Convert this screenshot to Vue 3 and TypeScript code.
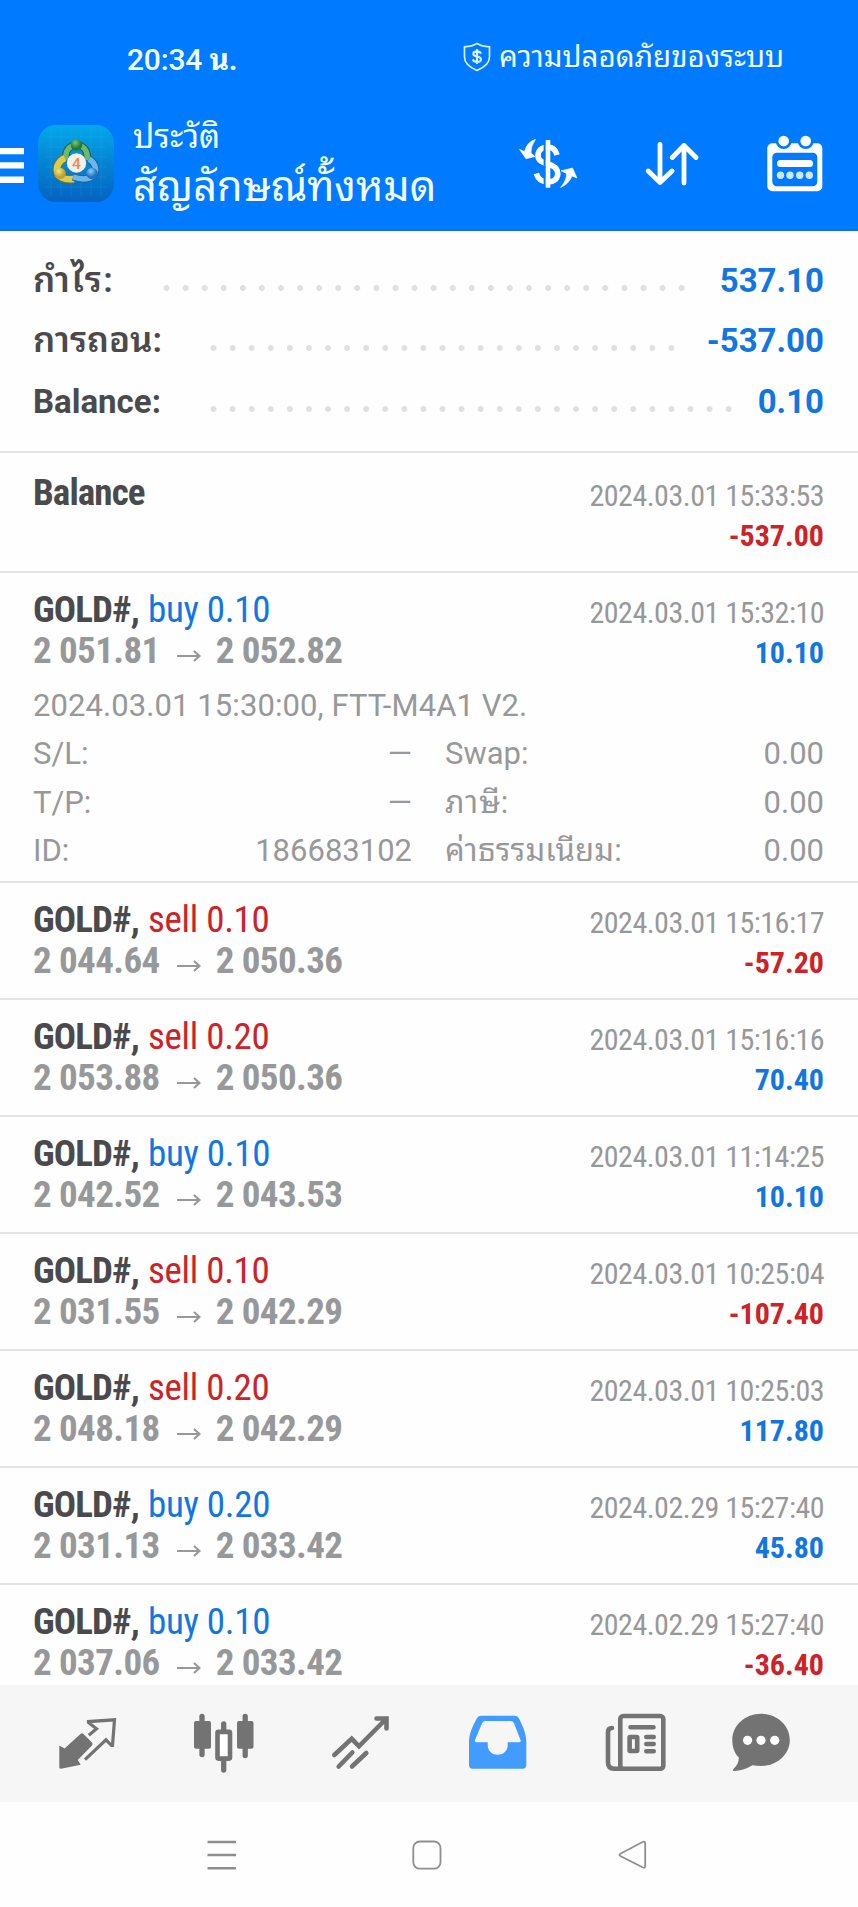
<script setup lang="ts">
interface Summary { label: string; value: string; labelWidth: number; dots: number; cls?: string }
interface Deal {
  kind: 'balance' | 'buy' | 'sell'
  volume?: string
  open?: string
  close?: string
  time: string
  profit: string
  expanded?: boolean
}

const summary: Summary[] = [
  { label: 'กำไร:', value: '537.10', labelWidth: 123, dots: 28, cls: 'thai wide' },
  { label: 'การถอน:', value: '-537.00', labelWidth: 170, dots: 25, cls: 'thai' },
  { label: 'Balance:', value: '0.10', labelWidth: 170, dots: 28 },
]

const deals: Deal[] = [
  { kind: 'balance', time: '2024.03.01 15:33:53', profit: '-537.00' },
  { kind: 'buy', volume: '0.10', open: '2 051.81', close: '2 052.82', time: '2024.03.01 15:32:10', profit: '10.10', expanded: true },
  { kind: 'sell', volume: '0.10', open: '2 044.64', close: '2 050.36', time: '2024.03.01 15:16:17', profit: '-57.20' },
  { kind: 'sell', volume: '0.20', open: '2 053.88', close: '2 050.36', time: '2024.03.01 15:16:16', profit: '70.40' },
  { kind: 'buy', volume: '0.10', open: '2 042.52', close: '2 043.53', time: '2024.03.01 11:14:25', profit: '10.10' },
  { kind: 'sell', volume: '0.10', open: '2 031.55', close: '2 042.29', time: '2024.03.01 10:25:04', profit: '-107.40' },
  { kind: 'sell', volume: '0.20', open: '2 048.18', close: '2 042.29', time: '2024.03.01 10:25:03', profit: '117.80' },
  { kind: 'buy', volume: '0.20', open: '2 031.13', close: '2 033.42', time: '2024.02.29 15:27:40', profit: '45.80' },
  { kind: 'buy', volume: '0.10', open: '2 037.06', close: '2 033.42', time: '2024.02.29 15:27:40', profit: '-36.40' },
]

const DOT_PITCH = 19.08
</script>

<template>
  <div class="phone">
    <header class="top">
      <div class="status">
        <div class="clock">20:34 <span class="clock-unit">น.</span></div>
        <div class="security">
          <svg width="28" height="30" viewBox="0 0 28 30" fill="none" stroke="#d8f0ff" stroke-width="1.7">
            <path d="M14 1.5C10 4 6 4.6 1.5 4.8V15C1.5 22 7 25.500 14 28.500C21 25.500 26.500 22 26.500 15V4.800C22 4.600 18 4 14 1.500Z" />
            <path d="M18 11.600C17.300 9.900 15.800 9.400 14 9.400C11.800 9.400 10.300 10.400 10.300 12C10.300 15.600 18 13.400 18 17.200C18 18.900 16.300 19.900 14 19.900C12 19.900 10.400 19.200 9.800 17.400M14 7V22" stroke-width="2.100" />
          </svg>
          <span class="security-text">ความปลอดภัยของระบบ</span>
        </div>
      </div>
      <div class="toolbar">
        <svg class="burger" width="24" height="36" viewBox="0 0 24 36" fill="#fff">
          <path d="M0 0H24V6.300H0ZM0 14.300H24V20.600H0ZM0 28.600H24V35H0Z" />
        </svg>
        <svg class="logo" width="76" height="77" viewBox="0 0 76 77">
          <defs>
            <linearGradient id="bg" x1="0" y1="0" x2="0" y2="1"><stop offset="0" stop-color="#04a8ec" /><stop offset=".5" stop-color="#0583d2" /><stop offset="1" stop-color="#0463c2" /></linearGradient>
            <radialGradient id="gr" cx=".4" cy=".3"><stop offset="0" stop-color="#7cc47a" /><stop offset="1" stop-color="#237a37" /></radialGradient>
            <radialGradient id="ye" cx=".4" cy=".3"><stop offset="0" stop-color="#f4ea8a" /><stop offset="1" stop-color="#bfa22a" /></radialGradient>
            <radialGradient id="bl" cx=".4" cy=".3"><stop offset="0" stop-color="#8fd0f8" /><stop offset="1" stop-color="#1e74c0" /></radialGradient>
          </defs>
          <rect width="76" height="77" rx="18" fill="url(#bg)" />
          <path d="M8 12H68M8 22H68M8 32H68M8 42H68M8 52H68M8 62H68M13 5V71M23 5V71M33 5V71M43 5V71M53 5V71M63 5V71" stroke="#4fc3f2" stroke-opacity=".14" stroke-width="1" />
          <path d="M28 35C25 15 52 15 49 35" fill="none" stroke="#1b6145" stroke-width="7.500" />
          <path d="M28 35C25 15 52 15 49 35" fill="none" stroke="#6bb96b" stroke-width="5.500" />
          <path d="M27 33C15 38 15 57 36 54" fill="none" stroke="#6f6f38" stroke-width="8.500" />
          <path d="M27 33C15 38 15 57 36 54" fill="none" stroke="#dccb4c" stroke-width="6.500" />
          <path d="M51 34C63 41 59 60 35 52" fill="none" stroke="#1c5f9f" stroke-width="7.500" />
          <path d="M51 34C63 41 59 60 35 52" fill="none" stroke="#6db6e8" stroke-width="5.500" />
          <circle cx="38.500" cy="20" r="5.800" fill="url(#gr)" />
          <circle cx="22" cy="48.500" r="5.800" fill="url(#ye)" />
          <circle cx="54" cy="48.500" r="5.800" fill="url(#bl)" />
          <circle cx="38.500" cy="38" r="9.700" fill="#f4f1ea" />
          <text x="38.500" y="43.500" text-anchor="middle" font-family="Roboto, sans-serif" font-size="15.500" font-weight="500" fill="#f08a4a">4</text>
        </svg>
        <div class="titles">
          <div class="title-small">ประวัติ</div>
          <div class="title-big">สัญลักษณ์ทั้งหมด</div>
        </div>
        <div class="actions">
          <svg width="60" height="52" viewBox="0 0 60 52">
            <path d="M1.500 11.300L6.500 13.500Q9 4 17.500 1.300Q12.500 9 13 15L17 18.500L8 20.800Z M54.500 30L59 40L54 38Q51 46 42.500 49.500Q49 42 48.500 35.500L43 32.800Z" fill="#fff" stroke="#fff" stroke-width=".6" stroke-linejoin="round" />
            <path d="M39 17C37.300 11 34 9 30 9C24 9 20 12.500 20 17.500C20 22.500 24 24.300 30 26C36 27.700 39.800 30.500 39.800 35.500C39.800 41 35.500 44 30 44C24.500 44 20 41 18.300 35.500" fill="none" stroke="#fff" stroke-width="5.600" />
            <path d="M26.700 3V49" stroke="#007bff" stroke-width="2.200" />
            <path d="M30 2V49.700" stroke="#fff" stroke-width="4.600" />
          </svg>
          <svg width="55" height="44" viewBox="0 0 55 44" fill="none" stroke="#fff" stroke-width="4.800" stroke-linecap="round" stroke-linejoin="round">
            <path d="M15 2.500V40M3.200 29L15 40.500L27 29M39 41V3.500M27.300 15.500L39 3.500L51 15.500" />
          </svg>
          <svg width="56" height="57" viewBox="0 0 56 57">
            <rect x=".3" y="8.300" width="55" height="48" rx="5" fill="#fff" />
            <circle cx="16.700" cy="6" r="8" fill="#007bff" /><circle cx="38.700" cy="6" r="8" fill="#007bff" />
            <circle cx="16.700" cy="6" r="5.300" fill="#fff" /><circle cx="38.700" cy="6" r="5.300" fill="#fff" />
            <rect x="5.300" y="17.700" width="45" height="33.500" rx="4.500" fill="#007bff" />
            <rect x="10" y="25" width="36" height="7" rx="3.500" fill="#fff" />
            <g fill="#cfe6ff"><circle cx="13.500" cy="40.300" r="3.700" /><circle cx="23" cy="40.300" r="3.700" /><circle cx="32.700" cy="40.300" r="3.700" /><circle cx="42.300" cy="40.300" r="3.700" /></g>
          </svg>
        </div>
      </div>
    </header>

    <section class="summary">
      <div v-for="s in summary" :key="s.label" class="sum-row">
        <div class="sum-label" :class="s.cls" :style="{ width: s.labelWidth + 'px' }">{{ s.label }}</div>
        <div class="leader" :style="{ width: s.dots * DOT_PITCH + 'px' }"></div>
        <div class="sum-value">{{ s.value }}</div>
      </div>
    </section>

    <main class="list">
      <article v-for="(d, i) in deals" :key="i" class="deal" :class="{ balance: d.kind === 'balance' }">
        <div class="deal-head">
          <div class="deal-left">
            <div v-if="d.kind === 'balance'" class="line symbol">Balance</div>
            <template v-else>
              <div class="line"><span class="symbol">GOLD#,</span> <span class="side" :class="d.kind">{{ d.kind }} {{ d.volume }}</span></div>
              <div class="line prices">
                <span>{{ d.open }}</span>
                <svg width="24" height="12" viewBox="0 0 24 12" fill="none" stroke="#979899" stroke-width="2.200"><path d="M0 6H22.500M17 1L22.500 6L17 11" /></svg>
                <span>{{ d.close }}</span>
              </div>
            </template>
          </div>
          <div class="deal-right">
            <div class="time">{{ d.time }}</div>
            <div class="profit" :class="d.profit.startsWith('-') ? 'neg' : 'pos'">{{ d.profit }}</div>
          </div>
        </div>
        <div v-if="d.expanded" class="details">
          <div class="comment">2024.03.01 15:30:00, FTT-M4A1 V2.</div>
          <div class="grid">
            <span>S/L:</span><span class="num">—</span><span class="second">Swap:</span><span class="num">0.00</span>
            <span>T/P:</span><span class="num">—</span><span class="second tax">ภาษี:</span><span class="num">0.00</span>
            <span>ID:</span><span class="num">186683102</span><span class="second fee">ค่าธรรมเนียม:</span><span class="num">0.00</span>
          </div>
        </div>
      </article>
    </main>

    <nav class="tabs">
      <svg width="62" height="62" viewBox="0 0 62 62">
        <path d="M1.300 32.500L6.500 35.500L22.500 21Q24 19.600 25.500 21L34 29.500Q35.400 31 34 32.500L19.700 47L22.700 51.700L3 55.700Q1.300 56 1.300 54.300Z" fill="#737373" />
        <path d="M30.800 22.300L38.500 15.800L30.500 9.500V8.600L56.500 6.800L54.500 32.500H53.500L48 26.800L27 46.600" fill="none" stroke="#737373" stroke-width="3.200" />
      </svg>
      <svg width="62" height="62" viewBox="0 0 62 62">
        <path d="M9 3.500V41.500M52.200 3.500V42.500M30.700 11V18M30.700 46V57" stroke="#737373" stroke-width="5.300" stroke-linecap="round" />
        <rect x="1" y="8" width="17" height="27.700" rx="2" fill="#737373" /><rect x="44" y="8" width="16.500" height="27.700" rx="2" fill="#737373" />
        <rect x="24.500" y="18.900" width="12.500" height="26.700" rx="1" fill="#fff" stroke="#737373" stroke-width="4.600" />
      </svg>
      <svg width="62" height="62" viewBox="0 0 62 62" fill="none" stroke="#737373" stroke-width="4.600" stroke-linecap="round">
        <path d="M3.300 42L20.700 25.800L28 33.300L55 6M45.500 5.500H55.500V15.500M7.700 53.500L21.300 39.500M21 53.500L35.300 40" />
      </svg>
      <svg width="62" height="62" viewBox="0 0 62 62">
        <path fill-rule="evenodd" fill="#429cff" d="M13 2.700H47Q49.700 2.700 51 5.500C55 13.500 58.300 21 58.300 29V52Q58.300 55.700 54.600 55.700H4.700Q1 55.700 1 52V29C1 21 4.500 13.500 8.700 5.500Q10 2.700 13 2.700ZM17.500 8Q15 8 14 10.300L7 27Q6.300 29.300 8.500 29.300H19.700V32C19.700 45 39.700 45 39.700 32V29.300H51Q53.300 29.300 52.500 27L46 10.300Q45 8 42.500 8Z" />
      </svg>
      <svg width="64" height="62" viewBox="0 0 64 62" fill="none" stroke="#737373" stroke-width="4.600" stroke-linecap="round">
        <rect x="16.300" y="3" width="43" height="52.700" rx="3" />
        <path d="M8 15Q4 15 4 19V49Q4 55.700 10 55.700H18M26.500 14.300H49.500M42.300 24H49.700M42.300 31H49.700M42.300 38.200H49.700" />
        <rect x="25.600" y="24" width="7.600" height="14" rx=".5" />
      </svg>
      <svg width="62" height="62" viewBox="0 0 62 62">
        <path d="M30 .8C46 .8 58.800 12.500 58.800 27S46 53 30 53Q25.500 53 21.500 52.200Q12 57.800 3 58Q1 57.800 2.500 56Q8 50.500 7.800 44.500C3 40 1.300 33 1.300 27C1.300 12.500 14 .8 30 .8Z" fill="#737373" />
        <circle cx="16.600" cy="27.300" r="4.600" fill="#fff" /><circle cx="30" cy="27.300" r="4.600" fill="#fff" /><circle cx="43.700" cy="27.300" r="4.600" fill="#fff" />
      </svg>
    </nav>

    <footer class="sysnav">
      <svg width="30" height="30" viewBox="0 0 30 30" stroke="#8e8e8e" stroke-width="2.400"><path d="M.5 2H29M.5 15H29M.5 28.200H29" /></svg>
      <svg width="30" height="30" viewBox="0 0 30 30" fill="none" stroke="#8e8e8e" stroke-width="1.800"><rect x="1.300" y="1.500" width="27.200" height="27.200" rx="6.500" /></svg>
      <svg width="30" height="30" viewBox="0 0 30 30" fill="none" stroke="#8e8e8e" stroke-width="1.800"><path d="M2.300 13.700L24.500 2Q27.200 1 27.200 3.500V26Q27.200 28.500 24.500 27.300L2.300 16Q.6 14.800 2.300 13.700Z" /></svg>
    </footer>
  </div>
</template>

<style>
body { margin: 0; background: #fefefe; }
</style>

<style scoped>
.phone { width: 858px; height: 1907px; overflow: hidden; display: flex; flex-direction: column; background: #fefefe; font-family: Roboto, "Noto Sans Thai Looped", "Noto Sans Thai", sans-serif; color: #4a4a4c; }
.phone svg { display: block; flex: none; }
.top { height: 231px; flex: none; box-sizing: border-box; background: #007bff; color: #f2fbff; border-bottom: 2px solid #1270dc; }
.status { display: flex; height: 98px; }
.clock { width: 336px; padding-left: 127px; font-size: 30px; font-weight: 500; letter-spacing: -.2px; line-height: 120px; white-space: pre; }
.clock-unit { font-weight: 700; }
.security { display: flex; align-items: flex-start; gap: 8px; }
.security svg { margin-top: 42px; }
.security-text { font-size: 29.500px; line-height: 115px; white-space: nowrap; }
.toolbar { height: 131px; display: flex; align-items: center; }
.burger { margin-right: 14px; margin-top: 4px; }
.titles { margin-left: 19px; flex: 1; align-self: stretch; white-space: nowrap; }
.title-small { font-size: 33px; line-height: 50px; margin-top: 14px; height: 48px; }
.title-big { font-size: 41.500px; line-height: 54px; }
.actions { display: flex; align-items: center; gap: 67px; padding-right: 35px; }

.summary { height: 222px; flex: none; box-sizing: border-box; padding: 20px 34px 0 33px; border-bottom: 2px solid #e3e3e3; }
.sum-row { display: flex; height: 60.300px; line-height: 60px; font-size: 33px; font-weight: 700; }
.sum-label { flex: none; white-space: nowrap; box-sizing: content-box; padding-right: 1px; }
.thai { font-size: 35px; font-weight: 600; }
.wide { letter-spacing: 1.400px; }
.leader { flex: none; height: 6px; margin-top: 34px; background: radial-gradient(circle at center, #e0e0e0 2.600px, transparent 3.300px) 0 0 / 19.080px 6px repeat-x; }
.sum-value { margin-left: auto; color: #1276e0; }

.list { flex: 1; min-height: 0; overflow: hidden; }
.deal { box-sizing: border-box; height: 117px; border-bottom: 2px solid #e3e3e3; }
.deal.balance { height: 120px; padding-top: 3px; }
.deal:has(.details) { height: 310px; }
.deal-head { display: flex; justify-content: space-between; padding: 17px 34px 0 33px; white-space: nowrap; font-stretch: 75%; }
.line { height: 41px; line-height: 40px; font-size: 37px; letter-spacing: -.3px; }
.symbol { font-weight: 700; color: #4a4a4c; letter-spacing: -.9px; }
.side { margin-left: 1px; }
.prices { display: flex; height: 39px; font-weight: 700; color: #979899; letter-spacing: -.6px; }
.prices svg { margin: 19px 15px 0 17px; }
.buy, .pos { color: #1276e0; }
.sell, .neg { color: #cc2228; }
.deal-right { padding-top: 3px; text-align: right; }
.time { font-size: 30px; line-height: 40px; color: #979899; letter-spacing: -.5px; }
.profit { font-size: 30px; line-height: 40px; font-weight: 700; }
.details { padding: 9px 34px 0 33px; color: #979899; font-size: 31px; }
.comment { line-height: 48px; height: 48px; letter-spacing: .08px; }
.grid { display: grid; grid-template-columns: 150px 229px 246px 1fr; line-height: 48.500px; white-space: nowrap; }
.num { text-align: right; }
.second { padding-left: 33px; }
.tax { letter-spacing: .9px; }
.fee { letter-spacing: .25px; }

.tabs { height: 117px; flex: none; box-sizing: border-box; background: #f6f6f6; display: grid; grid-template-columns: 135px 138px 137px 136px 127px 1fr; padding: 28px 0 0 58px; }
.sysnav { height: 105px; flex: none; display: grid; grid-template-columns: 205px 206px 1fr; padding: 38px 0 0 207px; box-sizing: border-box; }
</style>
